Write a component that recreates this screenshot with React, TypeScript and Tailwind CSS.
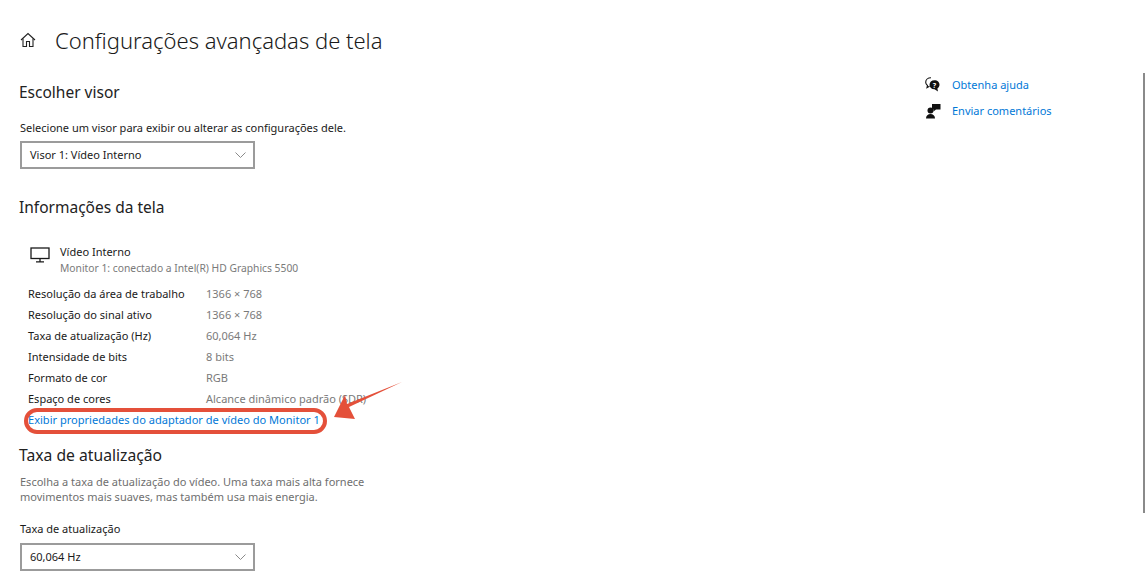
import React from "react";

const font = "font-['Noto_Sans','Open_Sans',sans-serif]";

const info = [
  ["Resolução da área de trabalho", "1366 × 768"],
  ["Resolução do sinal ativo", "1366 × 768"],
  ["Taxa de atualização (Hz)", "60,064 Hz"],
  ["Intensidade de bits", "8 bits"],
  ["Formato de cor", "RGB"],
  ["Espaço de cores", "Alcance dinâmico padrão (SDR)"],
];

const Select = ({ value }: { value: string }) => (
  <div className="ml-px flex h-[28px] w-[235px] items-center justify-between border-2 border-[#9b9b9b] pl-[8px] pr-[7px] text-[11px] text-[#1a1a1a]">
    <span>{value}</span>
    <svg width="11" height="6" viewBox="0 0 11 6" fill="none" stroke="#8a8a8a" strokeWidth="1">
      <path d="M.5.5 5.500 5.500l5-5" />
    </svg>
  </div>
);

const HomeIcon = () => (
  <svg width="16" height="16" viewBox="0 0 16 16" fill="none" stroke="#222222" strokeWidth="1.1">
    <path d="M1 8 8 1.500 15 8" />
    <path d="M3 6.500V14.500H6.500V9.500H9.500V14.500H13V6.500" />
  </svg>
);

const MonitorIcon = () => (
  <svg width="20" height="16" viewBox="0 0 20 16" fill="none" stroke="#1a1a1a" strokeWidth="1.3">
    <rect x="1" y="1" width="18" height="10.500" />
    <path d="M10 11.500V14.500M6 14.800H14" />
  </svg>
);

const HelpIcon = () => (
  <svg width="16" height="16" viewBox="0 0 16 16">
    <path d="M6 .8C2.800.8.700 2.800.700 5.200c0 1.400.7 2.500 1.800 3.300L2 10.600l2.500-1.400" fill="none" stroke="#111111" strokeWidth="1.100" />
    <path d="M9.500 3.300c-3 0-5 2-5 4.500s2 4.500 5 4.500l3.500 2.300-.6-3.200c1.300-.8 2.100-2.100 2.100-3.600 0-2.500-2-4.500-5-4.500Z" fill="#111111" />
    <text x="9.500" y="10.500" fontSize="7" fontWeight="700" fill="#ffffff" textAnchor="middle" fontFamily="Noto Sans">?</text>
  </svg>
);

const FeedbackIcon = () => (
  <svg width="16" height="16" viewBox="0 0 16 16" fill="#111111">
    <circle cx="5.500" cy="7.500" r="3" />
    <path d="M1 15.500c0-3 2-4.500 4.500-4.500s4.500 1.500 4.500 4.500Z" />
    <path d="M7 1h8.500v5.500H11L8.500 8.500V6.500H7Z" />
  </svg>
);

export default function App() {
  return (
    <div className={`${font} relative flex h-[573px] w-[1146px] overflow-hidden bg-white text-[#1a1a1a]`}>
      <div className="flex w-[925px] flex-col pl-[19px] pt-[25px]">
        <div className="flex h-[30px] items-center">
          <div className="ml-px">
            <HomeIcon />
          </div>
          <h1 className="ml-[19px] text-[22px] leading-[30px] font-light whitespace-nowrap">Configurações avançadas de tela</h1>
        </div>

        <h2 className="mt-[26px] text-[15.500px] leading-[22px] text-[#222222]">Escolher visor</h2>
        <p className="mt-[17px] pl-px text-[11px] leading-[16px]">Selecione um visor para exibir ou alterar as configurações dele.</p>
        <div className="mt-[5px]">
          <Select value="Visor 1: Vídeo Interno" />
        </div>

        <h2 className="mt-[27px] text-[15.500px] leading-[22px] text-[#222222]">Informações da tela</h2>

        <div className="mt-[26px] flex pl-[11px]">
          <div className="pt-[3px]">
            <MonitorIcon />
          </div>
          <div className="ml-[10px]">
            <div className="text-[11px] leading-[16px]">Vídeo Interno</div>
            <div className="text-[10.300px] leading-[16px] text-[#7a7a7a]">Monitor 1: conectado a Intel(R) HD Graphics 5500</div>
          </div>
        </div>

        <div className="mt-[8px] flex flex-col pl-[9px]">
          {info.map(([label, value]) => (
            <div key={label} className="flex h-[21px] items-center text-[11px]">
              <span className="w-[178px]">{label}</span>
              <span className="text-[#7a7a7a]">{value}</span>
            </div>
          ))}
          <a className="flex h-[21px] items-center text-[11.050px] text-[#0078d7]">Exibir propriedades do adaptador de vídeo do Monitor 1</a>
        </div>

        <h2 className="mt-[13px] text-[15.700px] leading-[22px] text-[#222222]">Taxa de atualização</h2>
        <p className="mt-[8px] w-[360px] pl-px text-[11px] leading-[15px] text-[#6f6f6f]">
          Escolha a taxa de atualização do vídeo. Uma taxa mais alta fornece movimentos mais suaves, mas também usa mais energia.
        </p>
        <p className="mt-[17px] pl-px text-[11px] leading-[16px]">Taxa de atualização</p>
        <div className="mt-[6px]">
          <Select value="60,064 Hz" />
        </div>
      </div>

      <div className="flex flex-col gap-[10px] pt-[77px] text-[11px] leading-[16px] text-[#0078d7]">
        <div className="flex items-center gap-[11px]">
          <HelpIcon />
          <span>Obtenha ajuda</span>
        </div>
        <div className="flex items-center gap-[11px]">
          <FeedbackIcon />
          <span>Enviar comentários</span>
        </div>
      </div>

      {/* scrollbar */}
      <div className="absolute right-[1px] top-[73px] h-[440px] w-[2px] bg-[#8a8a8a]" />

      {/* annotation over the link */}
      <div className="absolute left-[24px] top-[408px] h-[26px] w-[303px] rounded-[13px] border-[4px] border-[#e4503a]" />
      <svg className="absolute left-[320px] top-[375px]" width="90" height="55" viewBox="0 0 90 55">
        <path d="M82 7 29 32 35 44 14 42 25 20 27 29Z" fill="#e4503a" />
      </svg>
    </div>
  );
}
